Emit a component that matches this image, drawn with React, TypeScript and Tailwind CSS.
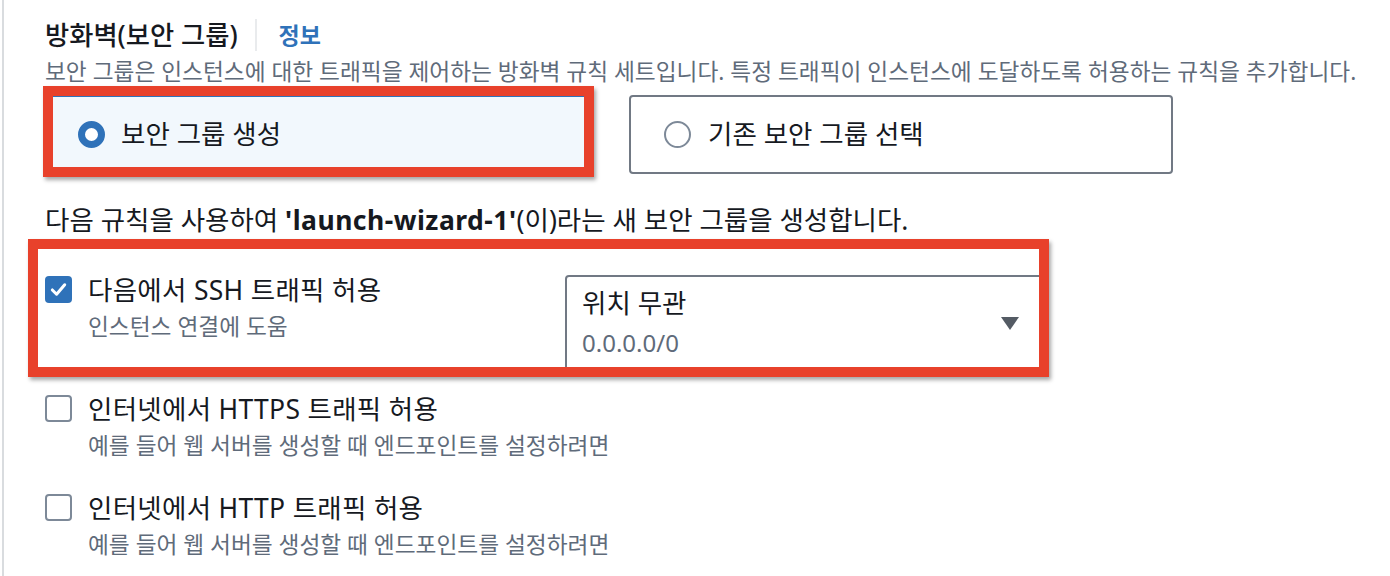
import React from 'react';

const Radio = ({ checked }: { checked: boolean }) =>
  checked ? (
    <span className="block w-[27px] h-[27px] rounded-full border-[7px] border-[#2f72b9] bg-white shrink-0" />
  ) : (
    <span className="block w-[27px] h-[27px] rounded-full border-2 border-[#7d8998] bg-white shrink-0" />
  );

const Checkbox = ({ checked }: { checked: boolean }) =>
  checked ? (
    <span className="w-[27px] h-[27px] rounded-[4px] bg-[#2f72b9] flex items-center justify-center shrink-0">
      <svg width="19" height="19" viewBox="0 0 20 20" fill="none">
        <path d="M3.5 10.5l4.5 4.5 8.5-10" stroke="#fff" strokeWidth="3.2" strokeLinecap="round" strokeLinejoin="round" />
      </svg>
    </span>
  ) : (
    <span className="block w-[27px] h-[27px] rounded-[4px] border-2 border-[#7d8998] bg-white shrink-0" />
  );

const Option = ({ label, sub, checked }: { label: string; sub: string; checked: boolean }) => (
  <div className="flex items-start">
    <div className="mt-[2px]">
      <Checkbox checked={checked} />
    </div>
    <div className="ml-[16px] whitespace-nowrap">
      <div className="text-[26.5px] leading-[32px] tracking-[0.3px] text-[#16191f]">{label}</div>
      <div className="mt-[7px] text-[22.7px] leading-[28px] text-[#5f6b7a]">{sub}</div>
    </div>
  </div>
);

export default function App() {
  return (
    <div className="relative w-[1390px] h-[576px] overflow-hidden bg-white pl-[2px] font-['Noto_Sans','Noto_Sans_CJK_KR',sans-serif]">
      <div className="h-full border-l-2 border-[#d9dcdf] pl-[41px] pt-[19px]">
        {/* header */}
        <div className="flex items-center h-[32px]">
          <h2 className="text-[26.3px] leading-[32px] font-medium text-[#16191f]">방화벽(보안 그룹)</h2>
          <div className="ml-[17px] w-[2px] h-[32px] bg-[#e9ebed]" />
          <a className="ml-[22px] text-[23px] font-bold text-[#2f72b9]">정보</a>
        </div>
        <p className="mt-[7px] text-[22.7px] leading-[28px] text-[#5f6b7a] whitespace-nowrap">
          보안 그룹은 인스턴스에 대한 트래픽을 제어하는 방화벽 규칙 세트입니다. 특정 트래픽이 인스턴스에 도달하도록 허용하는 규칙을 추가합니다.
        </p>

        {/* radio cards */}
        <div className="mt-[9px] grid grid-cols-[544px_544px] gap-[40px]">
          <div className="h-[79px] rounded-[4px] border-2 border-[#2f72b9] bg-[#f2f8fd] flex items-center pl-[31px]">
            <Radio checked />
            <span className="ml-[16px] text-[26.5px] text-[#16191f]">보안 그룹 생성</span>
          </div>
          <div className="h-[79px] rounded-[4px] border-2 border-[#717984] bg-white flex items-center pl-[33px]">
            <Radio checked={false} />
            <span className="ml-[17px] text-[26.5px] text-[#16191f]">기존 보안 그룹 선택</span>
          </div>
        </div>

        <p className="mt-[30px] text-[26.5px] leading-[32px] text-[#16191f] whitespace-nowrap">
          다음 규칙을 사용하여 <b className="font-bold tracking-[0.5px]">'launch-wizard-1'</b>(이)라는 새 보안 그룹을 생성합니다.
        </p>

        {/* SSH */}
        <div className="mt-[38px] flex items-start">
          <div className="w-[520px]">
            <Option checked label="다음에서 SSH 트래픽 허용" sub="인스턴스 연결에 도움" />
          </div>
          <div className="mt-[1px] w-[478px] h-[96px] rounded-[4px] border-2 border-[#717984] flex items-center justify-between pl-[15px] pr-[21px]">
            <div className="-mt-[2px]">
              <div className="text-[26.5px] leading-[32px] text-[#16191f]">위치 무관</div>
              <div className="mt-[10px] text-[24px] leading-[28px] text-[#5f6b7a]">0.0.0.0/0</div>
            </div>
            <svg width="20" height="15" viewBox="0 0 20 15">
              <path d="M1 1h18l-9 13z" fill="#545b64" />
            </svg>
          </div>
        </div>

        <div className="mt-[22px]">
          <Option checked={false} label="인터넷에서 HTTPS 트래픽 허용" sub="예를 들어 웹 서버를 생성할 때 엔드포인트를 설정하려면" />
        </div>
        <div className="mt-[32px]">
          <Option checked={false} label="인터넷에서 HTTP 트래픽 허용" sub="예를 들어 웹 서버를 생성할 때 엔드포인트를 설정하려면" />
        </div>
      </div>

      {/* annotation boxes */}
      <div className="absolute left-[43px] top-[86px] w-[551px] h-[91px] border-[10px] border-[#e8412b] shadow-[2px_3px_4px_rgba(0,0,0,0.35)]" />
      <div className="absolute left-[28px] top-[239px] w-[1021px] h-[138px] border-[10px] border-[#e8412b] shadow-[2px_3px_4px_rgba(0,0,0,0.35)]" />
    </div>
  );
}
